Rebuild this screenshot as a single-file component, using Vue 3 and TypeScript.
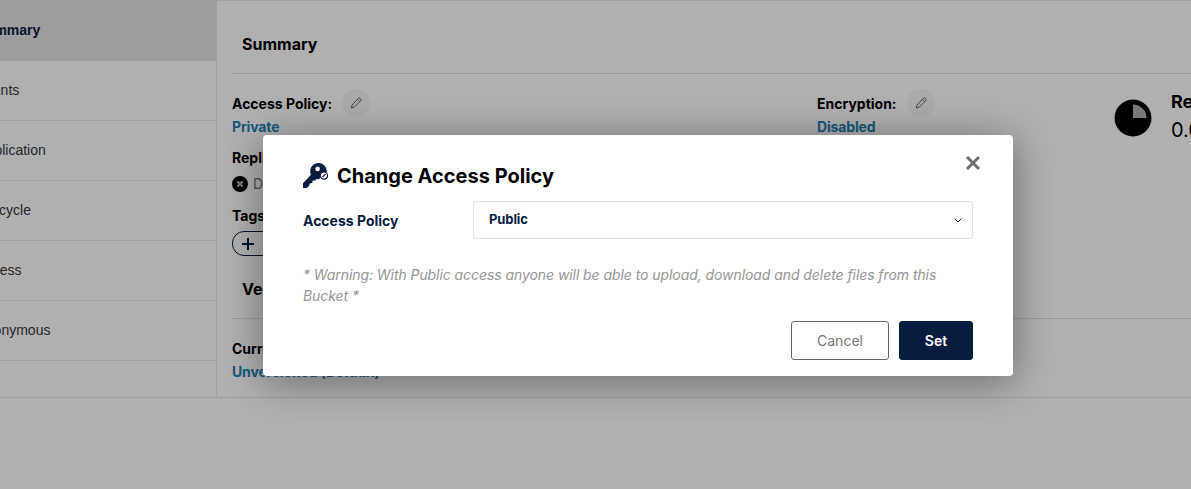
<script setup lang="ts">
const tabs: { label: string; active?: boolean }[] = [
  { label: 'Summary', active: true },
  { label: 'Events' },
  { label: 'Replication' },
  { label: 'Lifecycle' },
  { label: 'Access' },
  { label: 'Anonymous' },
]
</script>

<template>
  <div class="page">
    <div class="panel">
      <nav class="side">
        <div v-for="t in tabs" :key="t.label" class="tab" :class="{ active: t.active }">
          <span class="tab-label">{{ t.label }}</span>
        </div>
      </nav>
      <main class="main">
        <h2 class="sec-title first">Summary</h2>
        <div class="cols">
          <div class="col-a">
            <div class="label-row">
              <span class="lbl">Access Policy:</span>
              <span class="pen">
                <svg viewBox="0 0 12 12" width="12" height="12"><path d="M8.3 1.3a1.2 1.2 0 0 1 1.8 0l.6.6a1.2 1.2 0 0 1 0 1.8L4.2 10.2 1.4 10.9l.7-2.9zM7.4 2.4l2.2 2.2" fill="none" stroke="#666" stroke-width="1"/></svg>
              </span>
            </div>
            <div class="val">Private</div>
            <div class="lbl mt-repl">Replication:</div>
            <div class="status">
              <svg viewBox="0 0 16 16" width="16" height="16"><circle cx="8" cy="8" r="8" fill="#000"/><path d="M5.2 5.2l5.6 5.6M10.8 5.2l-5.6 5.6" stroke="#b0b0b0" stroke-width="2"/></svg>
              <span>Disabled</span>
            </div>
            <div class="lbl mt-tags">Tags:</div>
            <div class="tag-btn">
              <svg viewBox="0 0 12 12" width="12" height="12"><path d="M6 0v12M0 6h12" stroke="#081c42" stroke-width="2"/></svg>
              <span>Add tag</span>
            </div>
          </div>
          <div class="col-b">
            <div class="label-row">
              <span class="lbl">Encryption:</span>
              <span class="pen">
                <svg viewBox="0 0 12 12" width="12" height="12"><path d="M8.3 1.3a1.2 1.2 0 0 1 1.8 0l.6.6a1.2 1.2 0 0 1 0 1.8L4.2 10.2 1.4 10.9l.7-2.9zM7.4 2.4l2.2 2.2" fill="none" stroke="#666" stroke-width="1"/></svg>
              </span>
            </div>
            <div class="val">Disabled</div>
          </div>
          <div class="col-c">
            <svg class="pie" viewBox="0 0 38 38" width="38" height="38"><circle cx="19" cy="19" r="18.5" fill="#000"/><path d="M19 5.5a13.5 13.5 0 0 1 13.5 13.5H19z" fill="#b0b0b0"/></svg>
            <div>
              <div class="rep-t">Reported Usage</div>
              <div class="rep-v">0.0 B</div>
            </div>
          </div>
        </div>
        <h2 class="sec-title second">Versioning</h2>
        <div class="lbl mt-cur">Current Status:</div>
        <div class="val">Unversioned (Default)</div>
      </main>
    </div>

    <div class="overlay"></div>

    <section class="modal" role="dialog">
      <button class="close" aria-label="Close">
        <svg viewBox="0 0 16 16" width="16" height="16"><path d="M2 2l12 12M14 2L2 14" stroke="#707070" stroke-width="3"/></svg>
      </button>
      <header class="m-head">
        <svg class="key" viewBox="0 0 25 25" width="25" height="25">
          <path fill-rule="evenodd" d="M15.5 0a8.3 8.3 0 0 1 8.3 8.3v1.2H19l-1.5 5.3-1.8 1.5-2.3-.4-1.4 1.6-2.3-.1-.5 2.6-2.6.4-.4 2.6L3.6 25H0v-4.8l8-8.4a8.3 8.3 0 0 1 7.5-11.8zM14.6 3.6a2.3 2.3 0 1 0 0 4.6 2.3 2.3 0 0 0 0-4.6z" fill="#081c42"/>
          <circle cx="21" cy="12.6" r="3.6" fill="#fff" stroke="#081c42" stroke-width="1.2"/>
          <path d="M19.4 14.2l3.2-3.2" stroke="#081c42" stroke-width="1.2"/>
        </svg>
        <h3>Change Access Policy</h3>
      </header>
      <div class="field">
        <label>Access Policy</label>
        <div class="select">
          <span class="sel-text">Public</span>
          <svg viewBox="0 0 8 5" width="8" height="5"><path d="M.7.7L4 4l3.3-3.3" fill="none" stroke="#081c42" stroke-width="1"/></svg>
        </div>
      </div>
      <p class="warn">* Warning: With Public access anyone will be able to upload, download and delete files from this Bucket *</p>
      <div class="actions">
        <button class="btn cancel">Cancel</button>
        <button class="btn set">Set</button>
      </div>
    </section>
  </div>
</template>

<style>
html, body { margin: 0; overflow: hidden; background: #fff; }
</style>

<style scoped>
.page {
  position: relative;
  width: 1191px;
  height: 489px;
  overflow: hidden;
  font-family: Inter, "Liberation Sans", sans-serif;
  color: #000;
}
.panel {
  display: flex;
  height: 396px;
  border-top: 1px solid #e8e8e8;
  border-bottom: 1px solid #e8e8e8;
}
.side {
  width: 216px;
  flex: none;
  border-right: 1px solid #eaeaea;
}
.tab {
  height: 57px;
  padding-bottom: 2px;
  box-sizing: content-box;
  border-bottom: 1px solid #e8e8e8;
  display: flex;
  align-items: center;
  font-family: "Liberation Sans", Arial, sans-serif;
  font-size: 14px;
  color: #393939;
  overflow: hidden;
}
.tab-label { margin-left: -23.5px; white-space: nowrap; }
.tab.active { background: #e4e4e4; font-weight: 700; color: #081c42; border-bottom-color: #e4e4e4; }
.main { flex: 1; padding: 0 0 0 15px; overflow: hidden; min-width: 0; }
.sec-title {
  margin: 0;
  padding: 0 0 0 10px;
  font-size: 16px;
  font-weight: 700;
  line-height: 20px;
  border-bottom: 1px solid #e2e2e2;
}
.sec-title.first { padding-top: 33px; padding-bottom: 19px; }
.sec-title.second { padding-top: 0; padding-bottom: 19px; margin-top: 20px; }
.cols { display: flex; margin-top: 17px; height: 168px; }
.col-a { width: 585px; flex: none; }
.col-b { width: 297px; flex: none; }
.col-c { display: flex; gap: 19px; white-space: nowrap; }
.pie { margin-top: 8px; }
.label-row { display: flex; align-items: center; gap: 10px; height: 26px; }
.lbl { font-size: 14px; font-weight: 700; line-height: 20px; }
.val { font-size: 14px; font-weight: 700; line-height: 20px; color: #2781b0; letter-spacing: -0.15px; }
.pen {
  width: 28px; height: 28px; border-radius: 50%; margin-top: -2px;
  background: #f6f6f6; display: flex; align-items: center; justify-content: center;
}
.mt-repl { margin-top: 11px; }
.status { display: flex; align-items: center; gap: 5px; margin-top: 6px; font-size: 14px; color: #777; line-height: 20px; }
.mt-tags { margin-top: 12px; }
.tag-btn {
  display: inline-flex; align-items: center; gap: 10px;
  height: 23px; padding: 0 12px 0 9px; margin-top: 5px;
  border: 1px solid #081c42; border-radius: 12px;
  font-size: 12px; white-space: nowrap;
}
.rep-t { font-size: 18px; font-weight: 700; line-height: 22px; }
.rep-v { font-size: 20px; line-height: 28px; margin-top: 3px; color: #000; }
.mt-cur { margin-top: 20px; }
.main > .val { margin-top: 3px; }

.overlay { position: absolute; inset: 0; background: rgba(0, 0, 0, 0.31); }

.modal {
  position: absolute;
  left: 263px;
  top: 135px;
  width: 750px;
  height: 241px;
  box-sizing: border-box;
  padding: 28px 40px 16px;
  background: #fff;
  border-radius: 4px;
  box-shadow: 0 5px 40px rgba(0, 0, 0, 0.4);
}
.close {
  position: absolute; right: 32px; top: 20px;
  width: 16px; height: 16px; padding: 0; border: 0; background: none; display: flex;
}
.m-head { display: flex; align-items: center; gap: 9px; height: 25px; }
.m-head h3 { margin: 0; padding-top: 2px; font-size: 20px; font-weight: 700; line-height: 25px; color: #000; }
.field { display: flex; align-items: center; margin-top: 13px; }
.field label { width: 170px; flex: none; font-size: 14px; font-weight: 700; color: #081c42; }
.select {
  flex: 1; height: 38px; box-sizing: border-box;
  border: 1px solid #e4e4e4; border-radius: 3px;
  padding: 0 10px 0 15px;
  display: flex; align-items: center; justify-content: space-between;
  font-size: 13px; font-weight: 700; color: #081c42;
}
.sel-text { padding-bottom: 2px; letter-spacing: -0.1px; }
.warn {
  margin: 25px 0 0;
  font-size: 14px; font-style: italic; line-height: 21px; color: #969696;
  letter-spacing: -0.07px;
}
.actions { display: flex; justify-content: flex-end; gap: 10px; margin-top: 15px; }
.btn {
  height: 39px; border-radius: 3px; font-family: inherit; font-size: 14px;
  box-sizing: border-box; padding: 0;
}
.cancel { width: 98px; background: #fff; border: 1px solid #696969; color: #777; font-weight: 400; }
.set { width: 74px; background: #081c42; border: 1px solid #081c42; color: #fff; font-weight: 600; }
</style>
